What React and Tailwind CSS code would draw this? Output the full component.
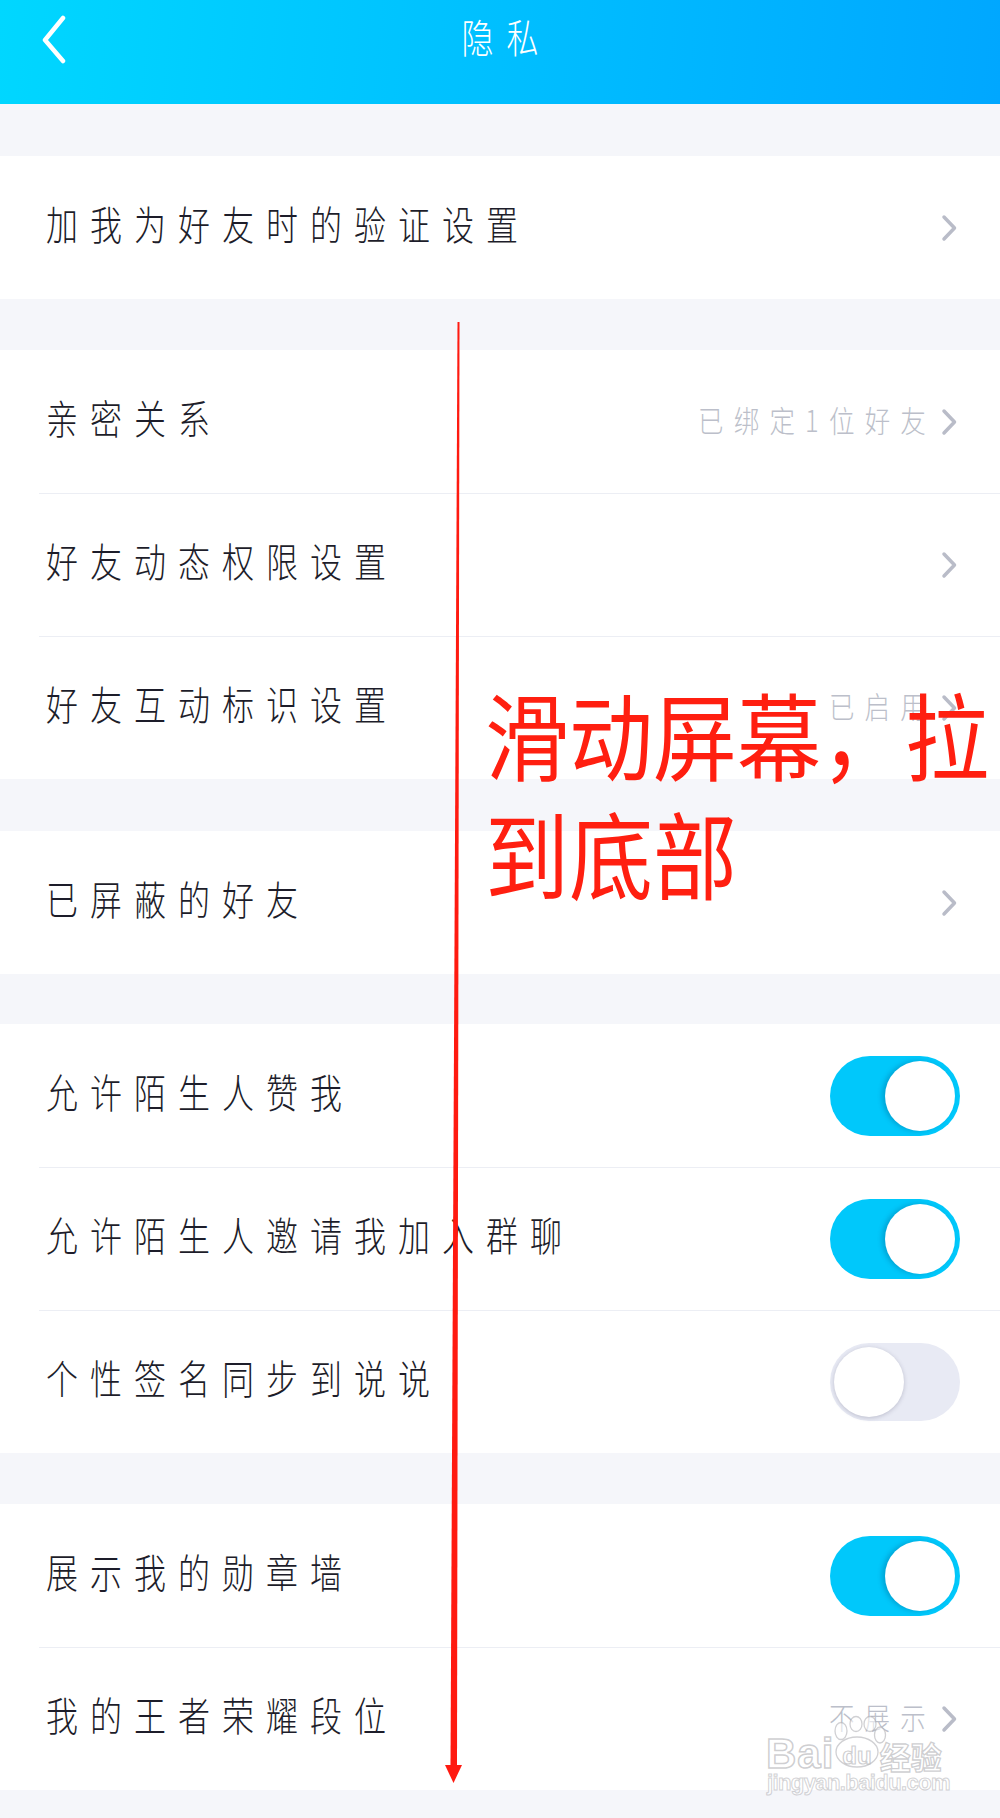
import React from "react";

function Chevron() {
  return (
    <svg width="20" height="28" viewBox="0 0 20 28" className="ml-[4px] shrink-0">
      <path d="M4 3 L14.5 14 L4 25" fill="none" stroke="#b9bcc8" strokeWidth="3.5" strokeLinecap="round" strokeLinejoin="round" />
    </svg>
  );
}

function Toggle({ on }) {
  if (on) {
    return (
      <div className="w-[130px] h-[80px] rounded-full bg-[#00c8fb] p-[5px] flex justify-end shrink-0">
        <div className="w-[70px] h-[70px] rounded-full bg-white shadow-[-3px_0_5px_rgba(0,70,110,0.28)]" />
      </div>
    );
  }
  return (
    <div className="w-[130px] h-[78px] rounded-full bg-[#e8eaf4] p-[4px] flex justify-start shrink-0">
      <div className="w-[70px] h-[70px] rounded-full bg-white shadow-[0_1px_4px_rgba(60,60,90,0.25)]" />
    </div>
  );
}

function Row({ first, label, value, chevron, toggle }) {
  return (
    <div className="h-[143px] pl-[39px] bg-white">
      <div
        className={
          first
            ? "h-full flex items-center justify-between pl-[7px] pr-[40px]"
            : "h-full flex items-center justify-between pl-[7px] pr-[40px] border-t border-[#eceef4]"
        }
      >
        <span className="inline-block origin-left scale-x-[0.8] text-[40px] leading-[40px] tracking-[15px] font-light text-[#1d1d2a] whitespace-nowrap mb-[10px]">
          {label}
        </span>
        <div className="flex items-center">
          {value && (
            <span className="inline-block origin-right scale-x-[0.85] text-[30px] leading-[30px] tracking-[12px] font-light text-[#bcbfca] whitespace-nowrap mb-[6px]">
              {value}
            </span>
          )}
          {chevron && <Chevron />}
          {toggle !== undefined && <Toggle on={toggle} />}
        </div>
      </div>
    </div>
  );
}

export default function App() {
  return (
    <div className="relative w-[1000px] h-[1818px] bg-[#f5f6fa] font-['Noto_Sans_CJK_SC','Noto_Sans',sans-serif] overflow-hidden">
      <header className="h-[104px] bg-[linear-gradient(95deg,#00d7ff,#00a7ff)] grid grid-cols-[1fr_auto_1fr] items-start">
        <div className="pl-[40px] pt-[15px]">
          <svg width="30" height="50" viewBox="0 0 30 50">
            <path d="M23 3 L5 25 L23 46" fill="none" stroke="#ffffff" strokeWidth="4.5" strokeLinecap="round" strokeLinejoin="round" />
          </svg>
        </div>
        <div className="pt-[16px]">
          <span className="inline-block origin-center scale-x-[0.8] text-[40px] leading-[40px] tracking-[16px] pl-[16px] font-light text-white">
            隐私
          </span>
        </div>
        <div />
      </header>

      <div className="h-[52px]" />
      <Row first label="加我为好友时的验证设置" chevron />

      <div className="h-[51px]" />
      <Row first label="亲密关系" value="已绑定1位好友" chevron />
      <Row label="好友动态权限设置" chevron />
      <Row label="好友互动标识设置" value="已启用" chevron />

      <div className="h-[52px]" />
      <Row first label="已屏蔽的好友" chevron />

      <div className="h-[50px]" />
      <Row first label="允许陌生人赞我" toggle={true} />
      <Row label="允许陌生人邀请我加入群聊" toggle={true} />
      <Row label="个性签名同步到说说" toggle={false} />

      <div className="h-[51px]" />
      <Row first label="展示我的勋章墙" toggle={true} />
      <Row label="我的王者荣耀段位" value="不展示" chevron />

      {/* red annotation arrow */}
      <svg className="absolute left-0 top-0 pointer-events-none" width="1000" height="1818" viewBox="0 0 1000 1818">
        <polygon points="457.5,322 459.5,322 457,1767 450.5,1767" fill="#ff1a10" />
        <polygon points="445,1765 462,1765 453.5,1783" fill="#ff1a10" />
      </svg>

      {/* red annotation text */}
      <div className="absolute left-[485px] top-[674px] origin-top scale-y-[1.14] text-[84px] leading-[103.5px] text-[#ff1f10] whitespace-nowrap">
        <div>滑动屏幕，拉</div>
        <div>到底部</div>
      </div>

      {/* watermark */}
      <div className="absolute left-[764px] top-[1712px] w-[190px] h-[85px] pointer-events-none">
        <svg className="absolute left-0 top-0" width="190" height="60" viewBox="0 0 190 60">
          <g fill="rgba(255,255,255,0.55)" stroke="rgba(170,170,175,0.55)" strokeWidth="1.3">
            <ellipse cx="77" cy="19" rx="6" ry="8.5" />
            <ellipse cx="92" cy="12" rx="6" ry="7.5" />
            <ellipse cx="106" cy="12" rx="6" ry="7.5" />
            <ellipse cx="116" cy="23" rx="5.5" ry="8" />
            <ellipse cx="93" cy="40" rx="21" ry="15" />
          </g>
        </svg>
        <div className="absolute left-[2px] top-[22px] flex items-end">
          <span className="font-['Liberation_Sans',sans-serif] font-bold text-[42px] leading-[40px] tracking-[1px] text-[rgba(255,255,255,0.55)] [-webkit-text-stroke:1.5px_rgba(165,165,170,0.55)]">
            Bai
          </span>
          <span className="ml-[8px] mb-[6px] font-['Liberation_Sans',sans-serif] font-bold text-[24px] leading-[24px] text-[rgba(255,255,255,0.55)] [-webkit-text-stroke:1.2px_rgba(165,165,170,0.55)]">
            du
          </span>
          <span className="ml-[8px] font-bold text-[31px] leading-[36px] text-[rgba(255,255,255,0.55)] [-webkit-text-stroke:1.3px_rgba(165,165,170,0.55)]">
            经验
          </span>
        </div>
        <div className="absolute left-[3px] top-[60px] font-['Liberation_Sans',sans-serif] font-bold text-[22px] leading-[22px] tracking-[-0.6px] text-[rgba(255,255,255,0.55)] [-webkit-text-stroke:1px_rgba(165,165,170,0.5)] whitespace-nowrap">
          jingyan.baidu.com
        </div>
      </div>
    </div>
  );
}
